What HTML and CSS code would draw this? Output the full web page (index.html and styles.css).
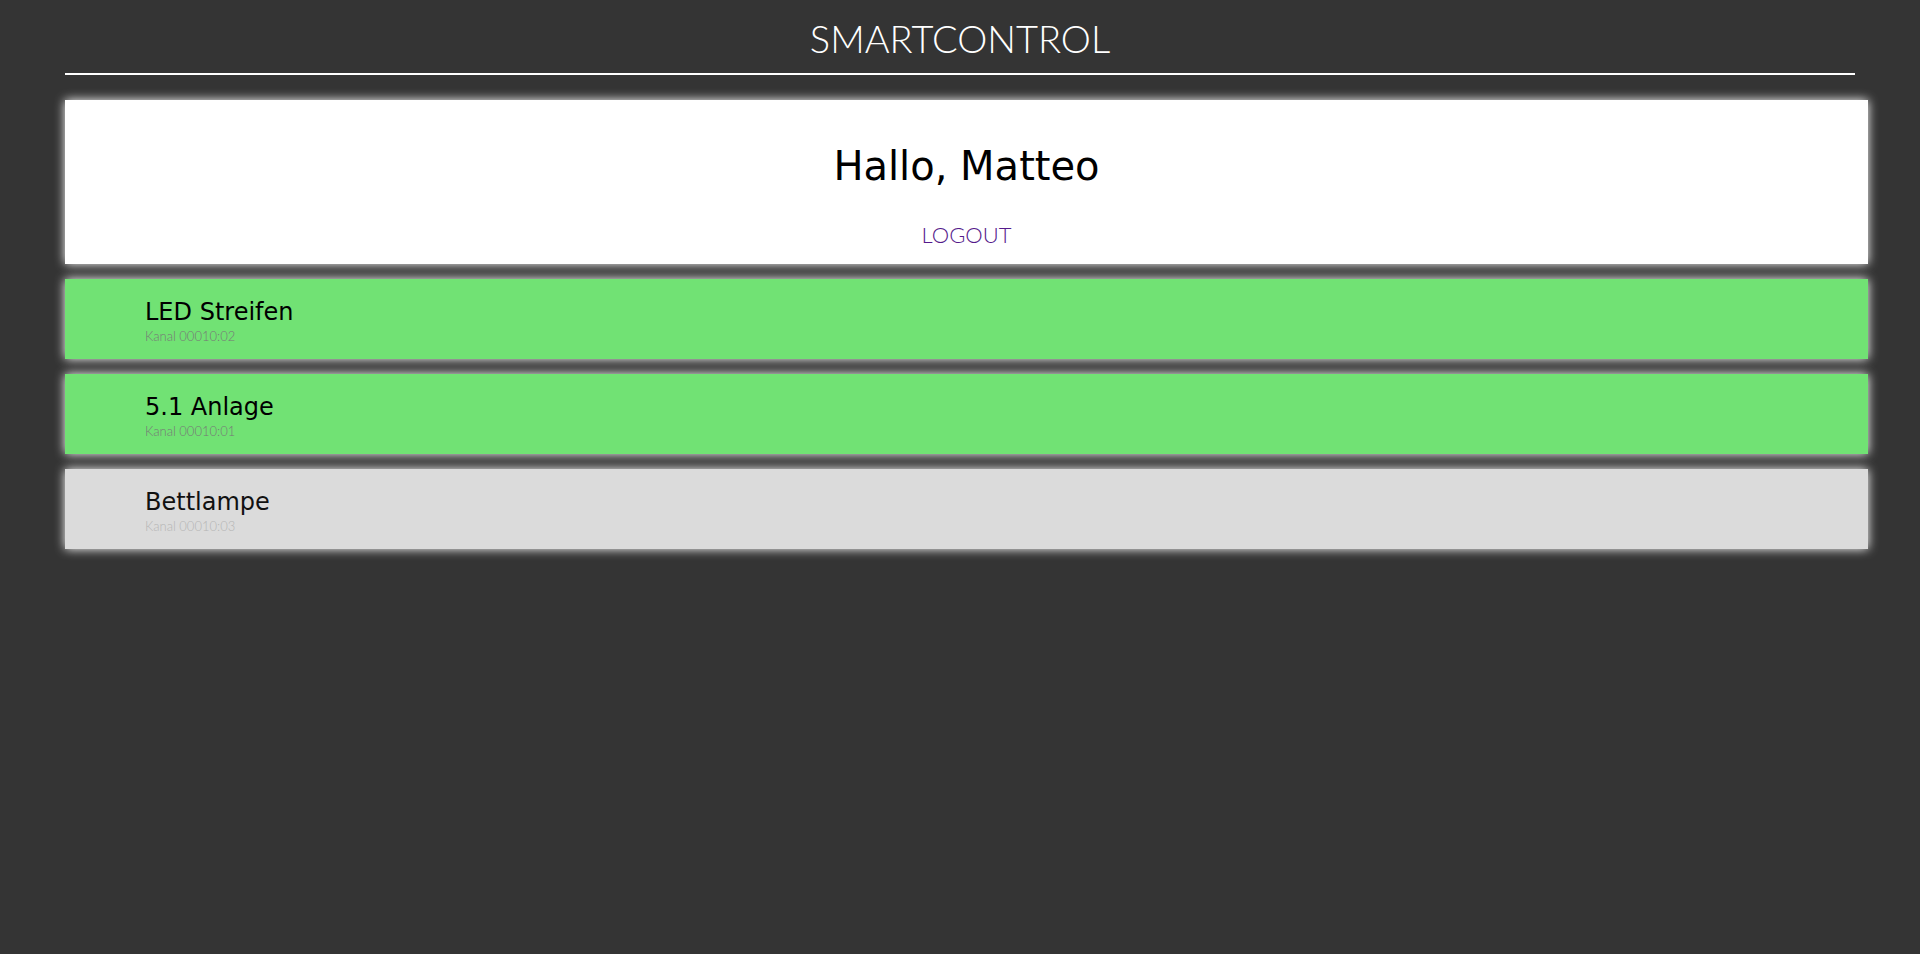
FILE: index.html
```
<!DOCTYPE html>
<html lang="de">
<head>
<meta charset="utf-8">
<title>SmartControl</title>
<link rel="stylesheet" href="styles.css">
</head>
<body>
<header class="header">
<h1 class="brand">SMARTCONTROL</h1>
</header>
<main class="cards">
<section class="card welcome">
<h2 class="greeting">Hallo, Matteo</h2>
<a class="logout" href="#logout">LOGOUT</a>
</section>
<section class="card device device-on">
<h3 class="name">LED Streifen</h3>
<p class="channel">Kanal 00010:02</p>
</section>
<section class="card device device-on">
<h3 class="name">5.1 Anlage</h3>
<p class="channel">Kanal 00010:01</p>
</section>
<section class="card device device-off">
<h3 class="name">Bettlampe</h3>
<p class="channel">Kanal 00010:03</p>
</section>
</main>
</body>
</html>
```
FILE: styles.css
```
* { box-sizing: border-box; }

body {
  min-height: 100vh;
  margin: 0;
  padding: 0 65px 24px;
  background: #343434;
  color: #000;
  font-family: "DejaVu Sans", sans-serif;
}

h1, h2, h3, p { margin: 0; font-weight: 400; }

.header {
  padding: 6px 0 3px;
  border-bottom: 2px solid #fff;
  text-align: center;
}

.brand {
  color: #fff;
  font-family: "Lato", sans-serif;
  font-size: 38px;
  font-weight: 300;
  line-height: 64px;
}

.cards {
  display: flex;
  flex-direction: column;
  gap: 15px;
  margin: 25px -13px 0 0;
}

.card { box-shadow: 0 0 10px #fff; }

.welcome {
  display: flex;
  flex-direction: column;
  align-items: center;
  gap: 30px;
  padding: 42px 0 14px;
  background: #fff;
}

.greeting {
  font-size: 40px;
  line-height: 48px;
}

.logout {
  color: #551a8b;
  font-family: "Lato", sans-serif;
  font-size: 22px;
  font-weight: 300;
  line-height: 30px;
  text-decoration: none;
}

.device { padding: 18px 80px 14px; }
.device-on { background: #71e274; }
.device-off { background: #dbdbdb; }

.name {
  font-size: 24px;
  line-height: 30px;
}

.channel {
  color: #777;
  font-family: "Lato", sans-serif;
  font-size: 13px;
  font-weight: 300;
  line-height: 18px;
}

.device-off .name { color: #111; }
.device-off .channel { color: #b5b5b5; }
```
